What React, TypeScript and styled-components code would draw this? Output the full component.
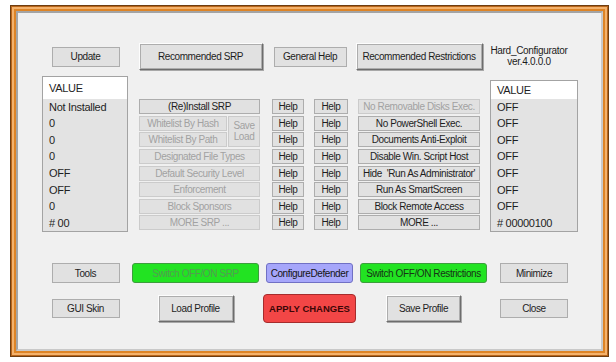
import React from 'react';
import styled, { createGlobalStyle } from 'styled-components';

const GlobalStyle = createGlobalStyle`
  html, body { margin: 0; padding: 0; background: #ffffff; }
  body { font-family: "Liberation Sans", Arial, sans-serif; color: #1e1e1e; }
`;

const Frame = styled.div`
  box-sizing: border-box;
  width: 599px;
  height: 352px;
  margin: 5px 0 0 10px;
  border: 1px solid #6e3d10;
  padding: 5px;
  background: #de8426;
  box-shadow: inset 0 0 0 1px #b9661b, inset 0 0 0 3px #f4b26c;
`;

const Panel = styled.div`
  box-sizing: border-box;
  height: 100%;
  border: 2px solid;
  border-color: #a4a4a4 #c9c9c9 #c9c9c9 #a4a4a4;
  background: #f0f0f0;
  padding: 30px 0 0 24px;
  display: flex;
  flex-direction: column;
`;

const Columns = styled.div`
  display: grid;
  grid-template-columns: 87px 123px 32px 34px 122px 88px;
  column-gap: 10px;
`;

const TopBar = styled(Columns)`
  height: 26px;
  align-items: center;
  justify-items: center;
`;

const Main = styled(Columns)`
  margin-top: 7px;
  height: 156px;
  grid-template-rows: 23px 1fr;
`;

const BottomGrid = styled.div`
  margin-top: 31px;
  display: grid;
  grid-template-columns: 87px 133px 95px 133px 88px;
  grid-template-rows: 20px 29px;
  row-gap: 11px;
  align-items: center;
  justify-items: center;
`;

const Btn = styled.button<{ $w?: number; $h?: number; $off?: boolean }>`
  box-sizing: border-box;
  width: ${p => (p.$w ? `${p.$w}px` : '100%')};
  height: ${p => p.$h ?? 15}px;
  margin: 0;
  padding: 0;
  display: flex;
  align-items: center;
  justify-content: center;
  background: #e1e1e1;
  border: 1px solid ${p => (p.$off ? '#cbcbcb' : '#adadad')};
  color: ${p => (p.$off ? '#a2a2a2' : '#1e1e1e')};
  font-family: "Liberation Sans", Arial, sans-serif;
  font-size: 10px;
  letter-spacing: -0.4px;
  white-space: pre;
  line-height: 11px;
`;

const RaisedBtn = styled(Btn)`
  border-color: #fdfdfd #6d6d6d #6d6d6d #fdfdfd;
  box-shadow: inset 0 0 0 1px #adadad, 1px 1px 0 #a8a8a8;
`;

const ColorBtn = styled(Btn)<{ $bg: string; $bd: string; $fg: string }>`
  border-radius: 3px;
  background: ${p => p.$bg};
  border-color: ${p => p.$bd};
  color: ${p => p.$fg};
`;

const ApplyBtn = styled(ColorBtn)`
  border-radius: 4px;
  font-weight: bold;
  font-size: 9.5px;
  letter-spacing: 0;
`;

const SpanHelp = styled(Btn)`
  grid-column: 3 / span 2;
`;

const Version = styled.div`
  font-size: 10px;
  letter-spacing: -0.3px;
  line-height: 10.5px;
  text-align: center;
  color: #1c1c1c;
  padding-right: 10px;
`;

const ValueList = styled.div<{ $col: number; $top: number; $w: number }>`
  grid-column: ${p => p.$col};
  grid-row: 1 / -1;
  margin-top: ${p => p.$top}px;
  width: ${p => p.$w}px;
  box-sizing: border-box;
  border: 1px solid #a3a3a3;
  background: #e3e3e3;
  display: flex;
  flex-direction: column;
  font-size: 11px;
  letter-spacing: -0.3px;
`;

const ListHead = styled.div<{ $h: number }>`
  height: ${p => p.$h}px;
  flex: none;
  background: #ffffff;
  display: flex;
  align-items: center;
  padding-left: 6px;
`;

const ListRow = styled.div`
  flex: 1;
  display: flex;
  align-items: center;
  padding-left: 6px;
`;

const Stack = styled.div<{ $col: number }>`
  grid-column: ${p => p.$col};
  grid-row: 2;
  display: grid;
  grid-template-rows: repeat(8, 16.625px);
  align-items: start;
`;

const WhitelistBlock = styled.div`
  grid-row: span 2;
  width: 121px;
  display: grid;
  grid-template-columns: 88px 32px;
  grid-template-rows: 15px 15px;
  column-gap: 1px;
  row-gap: 1.6px;
`;

const SaveLoad = styled(Btn)`
  grid-column: 2;
  grid-row: 1 / span 2;
  height: 100%;
  flex-direction: column;
`;

const leftValues = ['Not Installed', '0', '0', '0', 'OFF', 'OFF', '0', '# 00'];
const rightValues = ['OFF', 'OFF', 'OFF', 'OFF', 'OFF', 'OFF', 'OFF', '# 00000100'];

const restrictions: { t: string; off?: boolean }[] = [
  { t: 'No Removable Disks Exec.', off: true },
  { t: 'No PowerShell Exec.' },
  { t: 'Documents Anti-Exploit' },
  { t: 'Disable Win. Script Host' },
  { t: "Hide  'Run As Administrator'" },
  { t: 'Run As SmartScreen' },
  { t: 'Block Remote Access' },
  { t: 'MORE ...' },
];

const srpLower = ['Designated File Types', 'Default Security Level', 'Enforcement', 'Block Sponsors', 'MORE SRP ...'];

export default function App() {
  return (
    <>
      <GlobalStyle />
      <Frame>
        <Panel>
          <TopBar>
            <Btn $w={68} $h={20}>Update</Btn>
            <RaisedBtn $w={124} $h={27}>Recommended SRP</RaisedBtn>
            <SpanHelp $w={73} $h={20}>General Help</SpanHelp>
            <RaisedBtn $w={127} $h={27}>Recommended Restrictions</RaisedBtn>
            <Version>
              Hard_Configurator
              <br />
              ver.4.0.0.0
            </Version>
          </TopBar>

          <Main>
            <ValueList $col={1} $top={0} $w={86}>
              <ListHead $h={21.5}>VALUE</ListHead>
              {leftValues.map((v, i) => (
                <ListRow key={i}>{v}</ListRow>
              ))}
            </ValueList>

            <Stack $col={2}>
              <Btn $w={121}>(Re)Install SRP</Btn>
              <WhitelistBlock>
                <Btn $off>Whitelist By Hash</Btn>
                <Btn $off>Whitelist By Path</Btn>
                <SaveLoad $off>
                  <span>Save</span>
                  <span>Load</span>
                </SaveLoad>
              </WhitelistBlock>
              {srpLower.map(t => (
                <Btn key={t} $w={121} $off>
                  {t}
                </Btn>
              ))}
            </Stack>

            <Stack $col={3}>
              {restrictions.map((_, i) => (
                <Btn key={i}>Help</Btn>
              ))}
            </Stack>

            <Stack $col={4}>
              {restrictions.map((_, i) => (
                <Btn key={i}>Help</Btn>
              ))}
            </Stack>

            <Stack $col={5}>
              {restrictions.map(r => (
                <Btn key={r.t} $off={r.off}>
                  {r.t}
                </Btn>
              ))}
            </Stack>

            <ValueList $col={6} $top={4} $w={88}>
              <ListHead $h={17.5}>VALUE</ListHead>
              {rightValues.map((v, i) => (
                <ListRow key={i}>{v}</ListRow>
              ))}
            </ValueList>
          </Main>

          <BottomGrid>
            <Btn $w={68} $h={20}>Tools</Btn>
            <ColorBtn $w={127} $h={20} $bg="#22e322" $bd="#3c9e3c" $fg="#529c52">
              Switch OFF/ON SRP
            </ColorBtn>
            <ColorBtn $w={87} $h={20} $bg="#a6a6fa" $bd="#7070c4" $fg="#141414">
              ConfigureDefender
            </ColorBtn>
            <ColorBtn $w={127} $h={20} $bg="#22e322" $bd="#3c9e3c" $fg="#173417">
              Switch OFF/ON Restrictions
            </ColorBtn>
            <Btn $w={68} $h={20}>Minimize</Btn>

            <Btn $w={68} $h={19}>GUI Skin</Btn>
            <RaisedBtn $w={76} $h={27}>Load Profile</RaisedBtn>
            <ApplyBtn $w={93} $h={29} $bg="#f24646" $bd="#a52c2c" $fg="#3c0606">
              APPLY CHANGES
            </ApplyBtn>
            <RaisedBtn $w={75} $h={27}>Save Profile</RaisedBtn>
            <Btn $w={68} $h={19}>Close</Btn>
          </BottomGrid>
        </Panel>
      </Frame>
    </>
  );
}
